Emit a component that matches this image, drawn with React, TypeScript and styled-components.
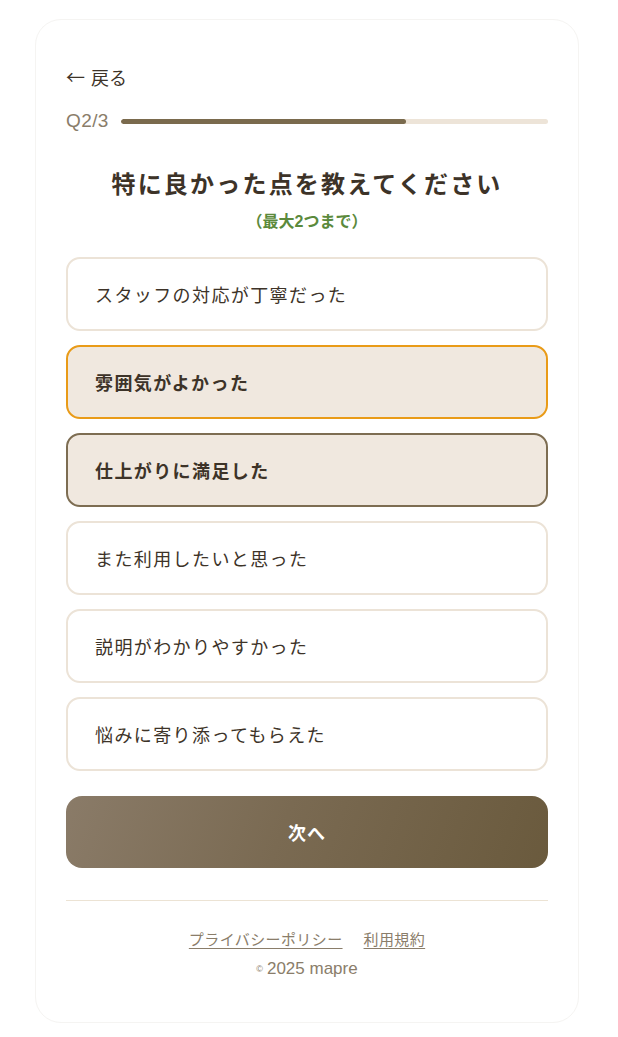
import React, { useState } from "react";
import styled, { createGlobalStyle, css } from "styled-components";

const GlobalStyle = createGlobalStyle`
  html, body {
    margin: 0;
    padding: 0;
    background: #ffffff;
  }
  body {
    font-family: "Liberation Sans", "Noto Sans CJK JP", sans-serif;
    color: #3d3328;
  }
  * {
    box-sizing: border-box;
  }
`;

const Card = styled.main`
  width: 544px;
  margin: 19px 0 16px 35px;
  padding: 45px 30px 43px;
  border: 1px solid #f5f4f2;
  border-radius: 26px;
  background: #ffffff;
  display: flex;
  flex-direction: column;
`;

const BackLink = styled.a`
  align-self: flex-start;
  display: flex;
  align-items: center;
  gap: 6px;
  font-family: "Noto Sans CJK JP", sans-serif;
  font-size: 18px;
  line-height: 24px;
  color: #3d3328;
  text-decoration: none;
  cursor: pointer;
`;

const Arrow = styled.span`
  font-size: 19px;
`;

const ProgressRow = styled.div`
  margin-top: 21px;
  display: flex;
  align-items: center;
  gap: 12px;
`;

const Step = styled.span`
  font-size: 19px;
  line-height: 22px;
  letter-spacing: 0.4px;
  color: #8a7d6a;
`;

const Track = styled.div`
  flex: 1;
  height: 5px;
  border-radius: 3px;
  background: #ede4d8;
  overflow: hidden;
`;

const Fill = styled.div`
  height: 100%;
  border-radius: 3px;
  background: #7a6a4d;
`;

const Title = styled.h1`
  margin: 36px 0 0;
  text-align: center;
  font-size: 24px;
  line-height: 34px;
  font-weight: 700;
  letter-spacing: 2.2px;
  color: #3d3328;
`;

const Note = styled.p`
  margin: 9px 0 0;
  text-align: center;
  font-size: 16px;
  line-height: 22px;
  font-weight: 700;
  color: #5b8a3c;
`;

const OptionList = styled.div`
  margin-top: 24px;
  display: flex;
  flex-direction: column;
  gap: 14px;
`;

const Option = styled.button<{ $selected: boolean; $focused: boolean }>`
  height: 74px;
  padding: 0 27px;
  display: flex;
  align-items: center;
  text-align: left;
  font-family: "Noto Sans CJK JP", sans-serif;
  font-size: 18px;
  letter-spacing: 1.4px;
  color: #3d3328;
  background: #ffffff;
  border: 2px solid #ece3d7;
  border-radius: 14px;
  cursor: pointer;
  ${(p) =>
    p.$selected &&
    css`
      background: #f0e8df;
      border-color: #7d6d52;
      font-weight: 700;
    `}
  ${(p) =>
    p.$focused &&
    css`
      border-color: #e99b18;
    `}
`;

const NextButton = styled.button`
  margin-top: 25px;
  height: 72px;
  border: none;
  border-radius: 16px;
  background: linear-gradient(110deg, #8a7b68 0%, #7a6a52 45%, #6a5a3d 100%);
  color: #ffffff;
  font-family: "Noto Sans CJK JP", sans-serif;
  font-size: 18px;
  font-weight: 700;
  letter-spacing: 1px;
  cursor: pointer;
`;

const Divider = styled.hr`
  margin: 32px 0 0;
  border: none;
  border-top: 1px solid #ece3d4;
`;

const Links = styled.nav`
  margin-top: 28px;
  display: flex;
  justify-content: center;
  gap: 21px;
`;

const FooterLink = styled.a`
  font-size: 15px;
  line-height: 22px;
  letter-spacing: 0.4px;
  color: #8a7d6a;
  text-decoration: underline;
  text-underline-offset: 3px;
  cursor: pointer;
`;

const Copy = styled.p`
  margin: 8px 0 0;
  text-align: center;
  font-size: 17px;
  line-height: 20px;
  color: #8a7d6a;
  & > small {
    font-size: 9px;
    vertical-align: 2px;
    margin-right: 4px;
  }
`;

const options = [
  "スタッフの対応が丁寧だった",
  "雰囲気がよかった",
  "仕上がりに満足した",
  "また利用したいと思った",
  "説明がわかりやすかった",
  "悩みに寄り添ってもらえた",
];

export default function App() {
  const [selected, setSelected] = useState<number[]>([1, 2]);
  const focused = 1;

  const toggle = (i: number) => {
    setSelected((prev) =>
      prev.includes(i)
        ? prev.filter((x) => x !== i)
        : prev.length < 2
        ? [...prev, i]
        : prev
    );
  };

  return (
    <>
      <GlobalStyle />
      <Card>
        <BackLink>
          <Arrow>←</Arrow>
          戻る
        </BackLink>
        <ProgressRow>
          <Step>Q2/3</Step>
          <Track>
            <Fill style={{ width: `${(2 / 3) * 100}%` }} />
          </Track>
        </ProgressRow>
        <Title>特に良かった点を教えてください</Title>
        <Note>（最大2つまで）</Note>
        <OptionList>
          {options.map((label, i) => (
            <Option
              key={label}
              $selected={selected.includes(i)}
              $focused={i === focused && selected.includes(i)}
              onClick={() => toggle(i)}
            >
              {label}
            </Option>
          ))}
        </OptionList>
        <NextButton>次へ</NextButton>
        <Divider />
        <Links>
          <FooterLink>プライバシーポリシー</FooterLink>
          <FooterLink>利用規約</FooterLink>
        </Links>
        <Copy>
          <small>©</small>2025 mapre
        </Copy>
      </Card>
    </>
  );
}
